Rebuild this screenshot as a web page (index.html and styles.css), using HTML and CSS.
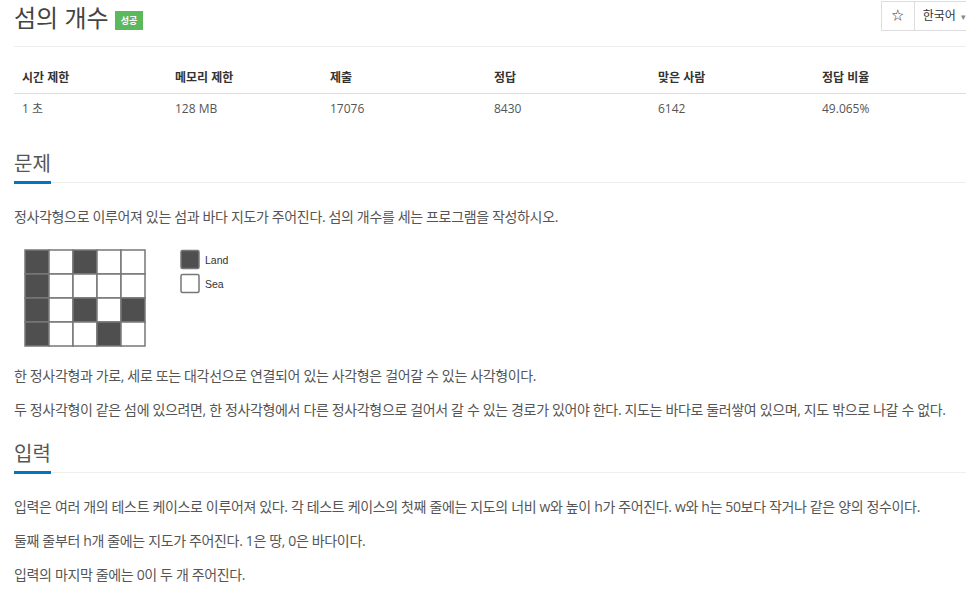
FILE: index.html
```html
<!DOCTYPE html>
<html lang="ko">
<head>
    <meta charset="UTF-8">
    <meta name="viewport" content="width=device-width, initial-scale=1.0">
    <title>섬의 개수</title>
    <link rel="stylesheet" href="styles.css">
</head>
<body>
<div class="page">

    <div class="title-bar">
        <h1>섬의 개수 <span class="label">성공</span></h1>
        <div class="btn-group">
            <span class="btn">☆</span>
            <span class="btn lang">한국어 <span class="caret">▾</span></span>
        </div>
    </div>

    <table class="info">
        <thead>
            <tr>
                <th class="c1">시간 제한</th>
                <th class="c2">메모리 제한</th>
                <th class="c3">제출</th>
                <th class="c3">정답</th>
                <th class="c3">맞은 사람</th>
                <th>정답 비율</th>
            </tr>
        </thead>
        <tbody>
            <tr>
                <td>1 초</td>
                <td>128 MB</td>
                <td>17076</td>
                <td>8430</td>
                <td>6142</td>
                <td>49.065%</td>
            </tr>
        </tbody>
    </table>

    <!-- 문제 -->
    <div class="headline"><h2>문제</h2></div>
    <p>정사각형으로 이루어져 있는 섬과 바다 지도가 주어진다. 섬의 개수를 세는 프로그램을 작성하시오.</p>
    <p class="figure">
        <svg width="220" height="115" viewBox="0 0 220 115">
            <g stroke="#777" stroke-width="1.5">
                <rect x="11" y="11" width="24" height="24" fill="#4f4f4f"/>
                <rect x="35" y="11" width="24" height="24" fill="#fff"/>
                <rect x="59" y="11" width="24" height="24" fill="#4f4f4f"/>
                <rect x="83" y="11" width="24" height="24" fill="#fff"/>
                <rect x="107" y="11" width="24" height="24" fill="#fff"/>

                <rect x="11" y="35" width="24" height="24" fill="#4f4f4f"/>
                <rect x="35" y="35" width="24" height="24" fill="#fff"/>
                <rect x="59" y="35" width="24" height="24" fill="#fff"/>
                <rect x="83" y="35" width="24" height="24" fill="#fff"/>
                <rect x="107" y="35" width="24" height="24" fill="#fff"/>

                <rect x="11" y="59" width="24" height="24" fill="#4f4f4f"/>
                <rect x="35" y="59" width="24" height="24" fill="#fff"/>
                <rect x="59" y="59" width="24" height="24" fill="#4f4f4f"/>
                <rect x="83" y="59" width="24" height="24" fill="#fff"/>
                <rect x="107" y="59" width="24" height="24" fill="#4f4f4f"/>

                <rect x="11" y="83" width="24" height="24" fill="#4f4f4f"/>
                <rect x="35" y="83" width="24" height="24" fill="#fff"/>
                <rect x="59" y="83" width="24" height="24" fill="#fff"/>
                <rect x="83" y="83" width="24" height="24" fill="#4f4f4f"/>
                <rect x="107" y="83" width="24" height="24" fill="#fff"/>

                <rect x="167" y="11.5" width="18" height="18" rx="1.5" fill="#4f4f4f"/>
                <rect x="167" y="35.5" width="18" height="18" rx="1.5" fill="#fff"/>
            </g>
            <text x="191" y="24.5" class="legend">Land</text>
            <text x="191" y="48.5" class="legend">Sea</text>
        </svg>
    </p>
    <p>한 정사각형과 가로, 세로 또는 대각선으로 연결되어 있는 사각형은 걸어갈 수 있는 사각형이다.</p>
    <p>두 정사각형이 같은 섬에 있으려면, 한 정사각형에서 다른 정사각형으로 걸어서 갈 수 있는 경로가 있어야 한다. 지도는 바다로 둘러쌓여 있으며, 지도 밖으로 나갈 수 없다.</p>

    <!-- 입력 -->
    <div class="headline"><h2>입력</h2></div>
    <p>입력은 여러 개의 테스트 케이스로 이루어져 있다. 각 테스트 케이스의 첫째 줄에는 지도의 너비 w와 높이 h가 주어진다. w와 h는 50보다 작거나 같은 양의 정수이다.</p>
    <p>둘째 줄부터 h개 줄에는 지도가 주어진다. 1은 땅, 0은 바다이다.</p>
    <p>입력의 마지막 줄에는 0이 두 개 주어진다.</p>

</div>
</body>
</html>
```

FILE: styles.css
```css
body {
    margin: 0;
    font-family: "Open Sans", "Noto Sans CJK KR", sans-serif;
    font-size: 14px;
    color: #555;
    background: #fff;
    overflow: hidden;
}
.page {
    width: 1000px;
    padding-left: 14px;
}
.title-bar {
    display: flex;
    justify-content: space-between;
    align-items: flex-start;
    height: 46px;
    border-bottom: 1px solid #eee;
}
h1 {
    margin: 0;
    padding-top: 2px;
    font-size: 24px;
    line-height: 32px;
    font-weight: normal;
    color: #444;
}
.label {
    display: inline-block;
    vertical-align: 3px;
    background-color: #5cb85c;
    color: white;
    font-size: 9px;
    font-weight: bold;
    line-height: 11px;
    padding: 4px 6px;
}
.btn-group {
    display: flex;
    margin-top: 1px;
    margin-right: 35px;
}
.btn {
    display: block;
    height: 28px;
    line-height: 28px;
    padding: 0 8px;
    border: 1px solid #ddd;
    font-size: 12px;
    color: #333;
    background: #fff;
}
.btn:first-child {
    width: 16px;
    text-align: center;
    border-right: none;
}
.btn.lang {
    padding-right: 12px;
}
.caret {
    font-size: 9px;
    color: #888;
    margin-left: 2px;
}
table.info {
    border-collapse: collapse;
    margin-top: 12px;
    margin-bottom: 17px;
    width: 960px;
    font-size: 12px;
}
.info th {
    text-align: left;
    color: #333;
    font-weight: bold;
    padding: 10px 8px 7px;
    line-height: 17px;
    border-bottom: 1px solid #ddd;
}
.info td {
    padding: 6px 8px 8px;
    line-height: 17px;
    color: #555;
}
.info .c1 { width: 137px; }
.info .c2 { width: 139px; }
.info .c3 { width: 148px; }
.headline {
    margin-top: 10px;
    margin-right: 34px;
    border-bottom: 1px solid #eee;
    margin-bottom: 22px;
}
.headline h2 {
    display: inline-block;
    margin: 0 0 -2px;
    padding: 8px 0 3px;
    font-size: 20px;
    line-height: 28px;
    font-weight: normal;
    color: #555;
    border-bottom: 3px solid #0076c0;
}
p {
    margin: 0 0 10px;
    line-height: 24px;
    letter-spacing: -0.35px;
    white-space: nowrap;
}
.figure {
    line-height: 0;
}
.legend {
    font-size: 10.5px;
    fill: #333;
    letter-spacing: 0;
    font-family: "Liberation Sans", sans-serif;
}
```
